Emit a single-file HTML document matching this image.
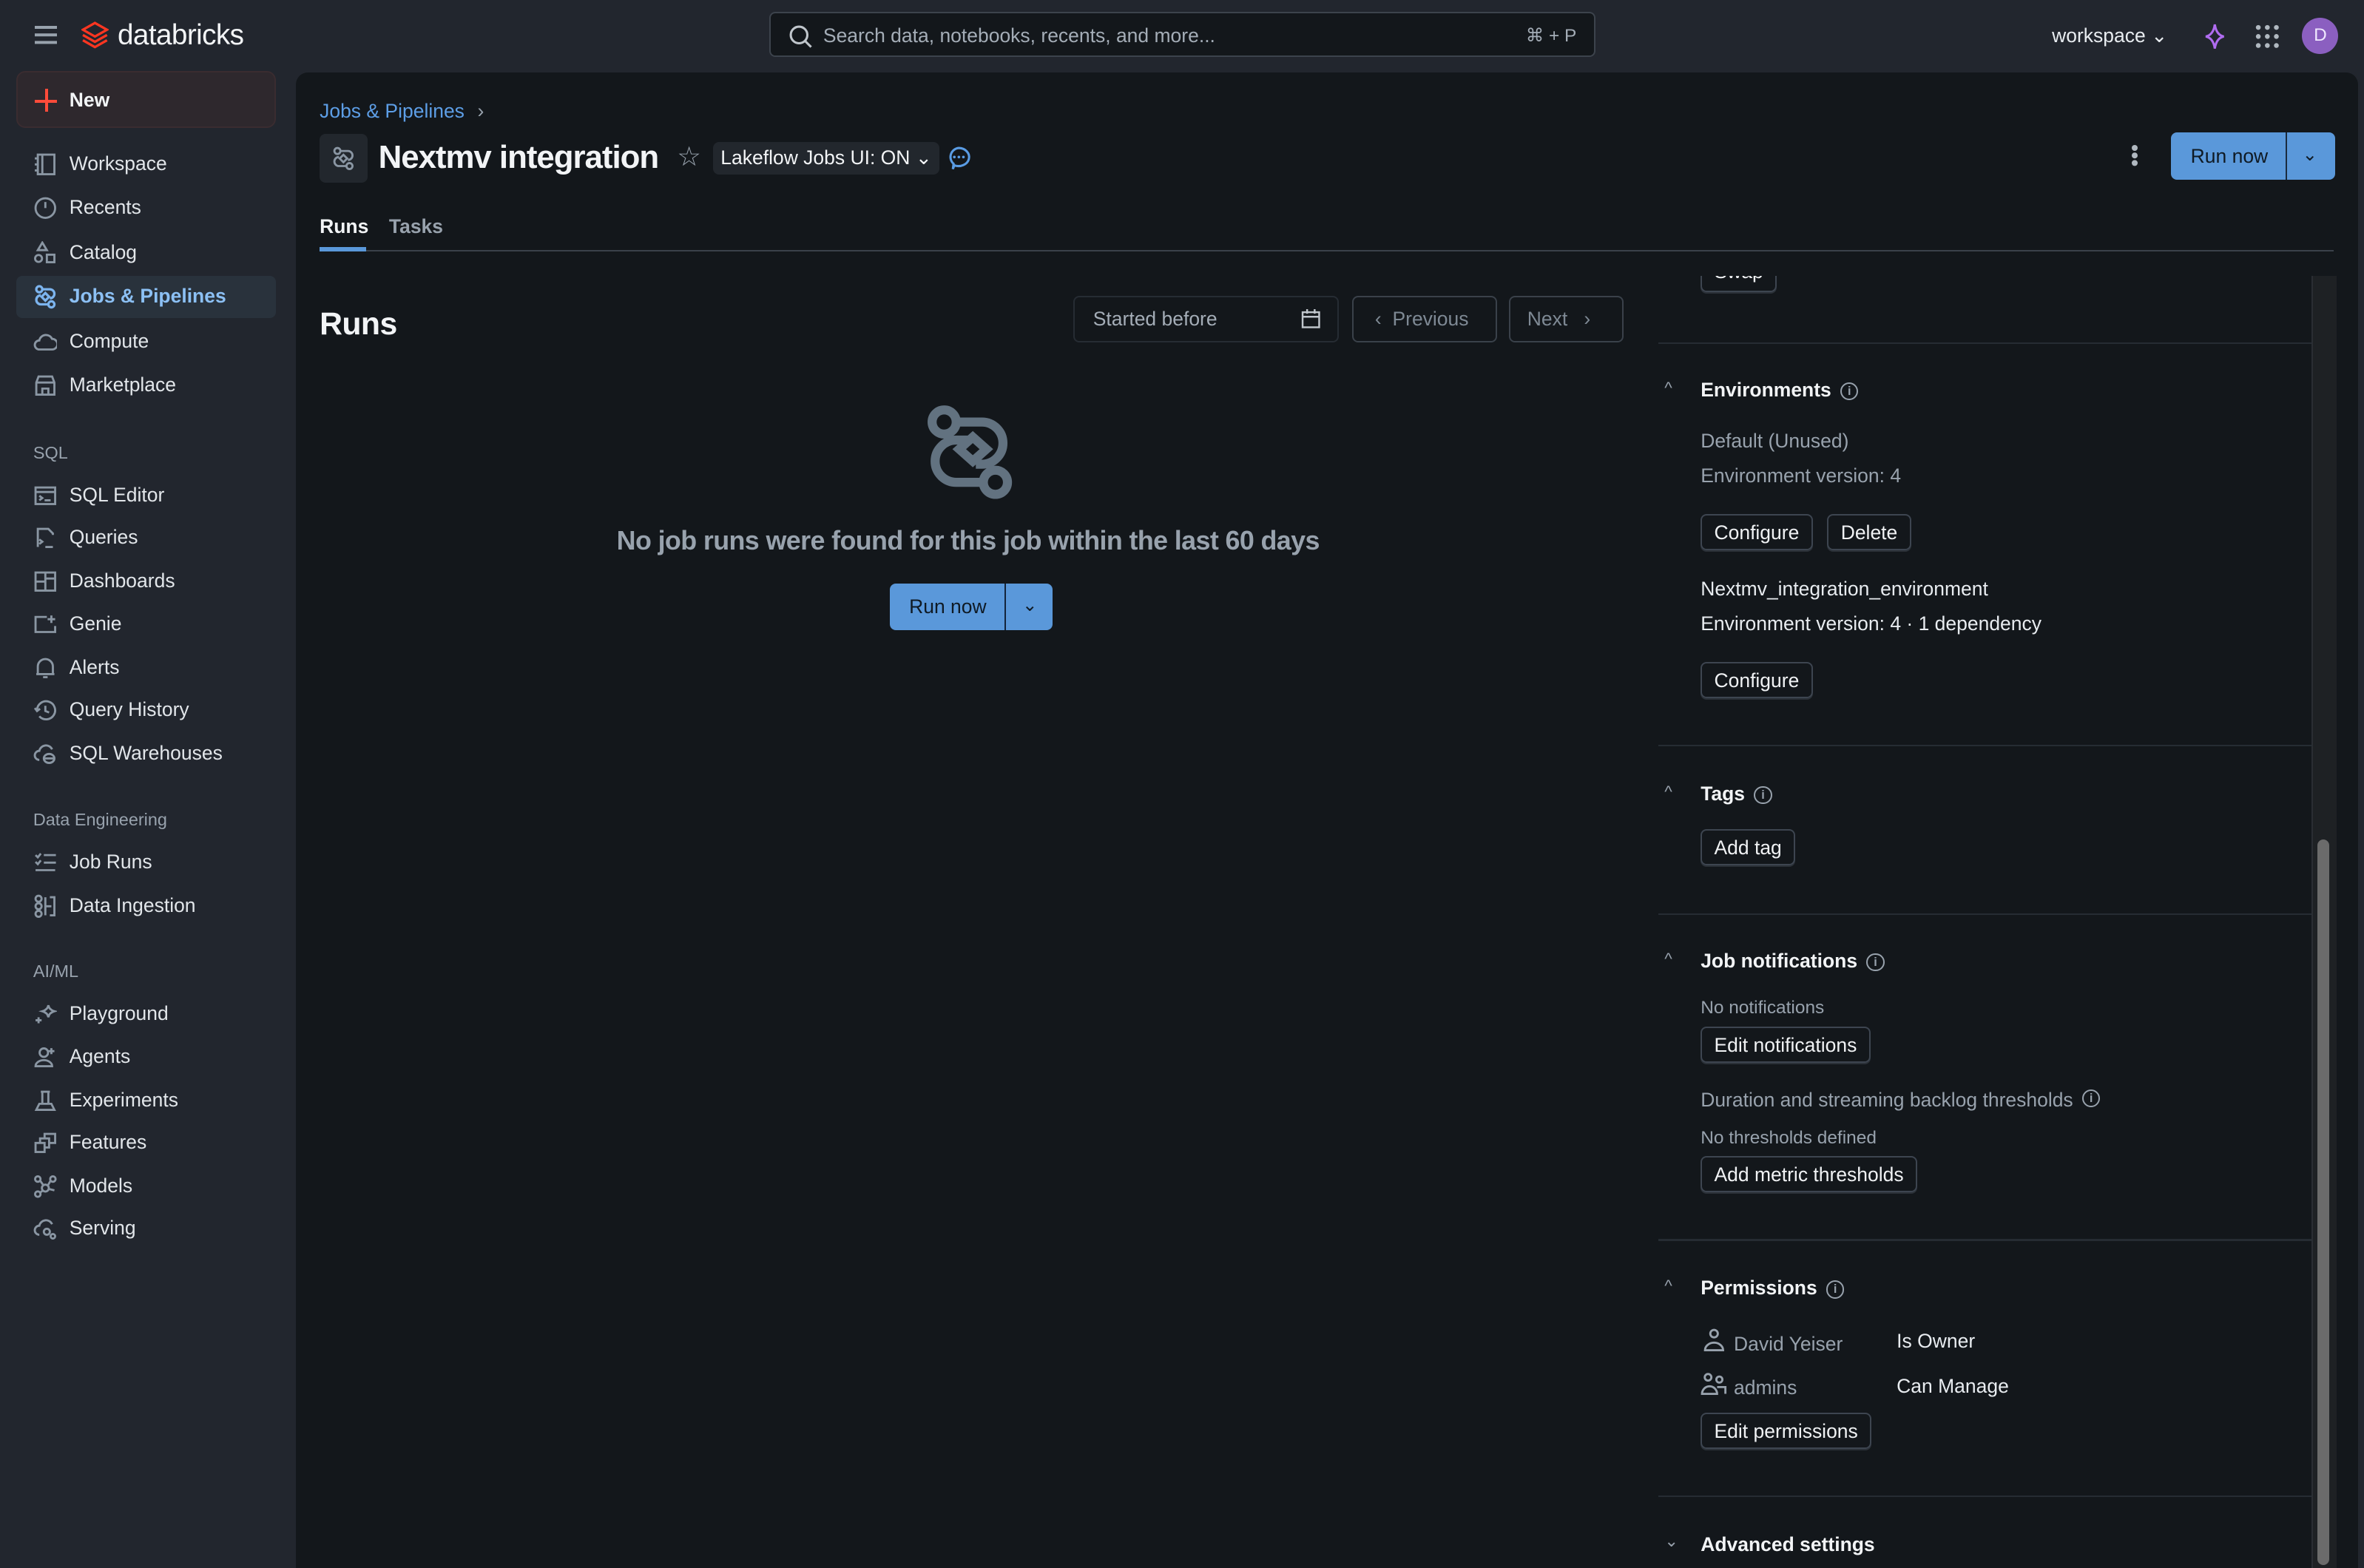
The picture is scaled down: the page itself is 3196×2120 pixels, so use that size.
<!DOCTYPE html>
<html><head><meta charset="utf-8"><style>
html,body{margin:0;padding:0;background:#22262e;width:3196px;height:2120px;overflow:hidden}
#r{zoom:2.0383;width:1568px;height:1040px;position:relative;font-family:"Liberation Sans",sans-serif;color:#e8ecf0;font-size:13px}
.a{position:absolute;white-space:nowrap}
.ic{position:absolute;width:16px;height:16px;fill:none;stroke:#8a96a3;stroke-width:1.4}
.nav{position:absolute;left:46px;font-size:13px;color:#e2e6ea}
.sec{position:absolute;left:22px;font-size:11.5px;color:#98a2ad}
.btn{position:absolute;border:1px solid #3d4550;border-radius:4px;height:22px;line-height:22px;padding:0 8px;font-size:13px;color:#f0f2f4;box-sizing:border-box;box-shadow:0 1px 0 #2b3138}
.hr{position:absolute;left:1100px;width:433px;height:1px;background:#262c33}
.h{position:absolute;left:1128px;font-weight:bold;font-size:13px;color:#f2f4f6}
.car{position:absolute;left:1104px;font-size:11px;color:#98a2ad}
.g{color:#98a2ad}
.info{display:inline-block;width:10px;height:10px;border:1.3px solid #98a2ad;border-radius:50%;font-size:8px;line-height:10px;text-align:center;color:#98a2ad;vertical-align:1px;margin-left:6px;font-weight:bold}
</style></head><body><div id="r">
<!-- top bar -->
<div class="a" style="left:23px;top:17px;width:15px;height:2px;background:#98a2ad;box-shadow:0 5px 0 #98a2ad,0 10px 0 #98a2ad"></div>
<svg class="a" style="left:54px;top:14px" width="18" height="19" viewBox="0 0 18 19"><path d="M9 1 L17 5.5 L9 10 L1 5.5 Z M1 9 L9 13.5 L17 9 M1 12.5 L9 17 L17 12.5" fill="none" stroke="#ff3621" stroke-width="1.6"/></svg>
<div class="a" style="left:78px;top:13px;font-size:19px;color:#f2f4f6;letter-spacing:-0.3px">databricks</div>
<div class="a" style="left:510px;top:8px;width:548px;height:30px;border:1px solid #3c434c;border-radius:4px;background:#13171b;box-sizing:border-box"></div>
<svg class="a" style="left:523px;top:16px" width="16" height="16"><circle cx="7" cy="7" r="5.5" fill="none" stroke="#c0c6cc" stroke-width="1.5"/><path d="M11 11 L15 15" stroke="#c0c6cc" stroke-width="1.5"/></svg>
<div class="a" style="left:546px;top:16px;color:#a4adb7;font-size:13px">Search data, notebooks, recents, and more...</div>
<div class="a" style="left:1012px;top:16px;color:#a4adb7;font-size:12px">⌘ + P</div>
<div class="a" style="left:1361px;top:16px;font-size:13px;color:#e8ecf0">workspace ⌄</div>
<svg class="a" style="left:1461px;top:15px" width="16" height="18"><path d="M8 1 Q9 8 14 9 Q9 10 8 17 Q7 10 2 9 Q7 8 8 1Z" fill="none" stroke="#b06cf0" stroke-width="1.5"/></svg>
<svg class="a" style="left:1496px;top:16px" width="16" height="16"><g fill="#b0b8c0"><circle cx="2" cy="2" r="1.6"/><circle cx="8" cy="2" r="1.6"/><circle cx="14" cy="2" r="1.6"/><circle cx="2" cy="8" r="1.6"/><circle cx="8" cy="8" r="1.6"/><circle cx="14" cy="8" r="1.6"/><circle cx="2" cy="14" r="1.6"/><circle cx="8" cy="14" r="1.6"/><circle cx="14" cy="14" r="1.6"/></g></svg>
<div class="a" style="left:1527px;top:12px;width:24px;height:24px;border-radius:50%;background:#8b5fc0;color:#f0e8ff;text-align:center;line-height:24px;font-size:12px">D</div>
<!-- sidebar -->
<div class="a" style="left:11px;top:47px;width:172px;height:38px;border-radius:6px;background:#2e282d;border:1px solid #3a2c30;box-sizing:border-box"></div>
<div class="a" style="left:23px;top:66px;width:15px;height:2px;background:#ff4b3a"></div>
<div class="a" style="left:30px;top:59px;width:2px;height:15px;background:#ff4b3a"></div>
<div class="nav" style="top:59px;font-weight:bold;color:#f2f4f6">New</div>
<div class="a" style="left:11px;top:183px;width:172px;height:28px;border-radius:4px;background:#29323c"></div>
<svg class="ic" style="left:22px;top:101px" viewBox="0 0 16 16"><rect x="3" y="1.5" width="11" height="13"/><path d="M6 1.5v13M1 4h2M1 8h2M1 12h2"/></svg>
<div class="nav" style="top:101px">Workspace</div>
<svg class="ic" style="left:22px;top:130px" viewBox="0 0 16 16"><circle cx="8" cy="8" r="6.5"/><path d="M8 4v4"/></svg>
<div class="nav" style="top:130px">Recents</div>
<svg class="ic" style="left:22px;top:160px" viewBox="0 0 16 16"><path d="M6 1l3 5H3z"/><circle cx="3.5" cy="11.5" r="2.3"/><rect x="9" y="9" width="5" height="5"/></svg>
<div class="nav" style="top:160px">Catalog</div>
<svg class="ic" style="left:22px;top:189px;stroke:#7cb4ee;stroke-width:1.6" viewBox="0 0 16 16"><circle cx="4" cy="3" r="2"/><circle cx="12" cy="13" r="2"/><path d="M6 3h5a3 3 0 0 1 0 6M10 13H5a3 3 0 0 1 0-6M8 5.5l2.5 2.5L8 10.5 5.5 8z"/></svg>
<div class="nav" style="top:189px;color:#8cc0f4;font-weight:bold">Jobs &amp; Pipelines</div>
<svg class="ic" style="left:22px;top:219px" viewBox="0 0 16 16"><path d="M4 13a3 3 0 0 1 0-6 4.5 4.5 0 0 1 8.5-1 3.5 3.5 0 0 1 0 7z"/></svg>
<div class="nav" style="top:219px">Compute</div>
<svg class="ic" style="left:22px;top:248px" viewBox="0 0 16 16"><path d="M2 6l1.5-4h9L14 6v8H2zM2 6h12M6 14v-4h4v4"/></svg>
<div class="nav" style="top:248px">Marketplace</div>
<div class="sec" style="top:294px">SQL</div>
<svg class="ic" style="left:22px;top:321px" viewBox="0 0 16 16"><rect x="1.5" y="2.5" width="13" height="11"/><path d="M1.5 5.5h13M4 8l2 1.5L4 11M7.5 11h4"/></svg><div class="nav" style="top:321px">SQL Editor</div>
<svg class="ic" style="left:22px;top:349px" viewBox="0 0 16 16"><path d="M3 14V2h7l3 3v1M4 9l2 1.5L4 12M8 14h5"/></svg><div class="nav" style="top:349px">Queries</div>
<svg class="ic" style="left:22px;top:378px" viewBox="0 0 16 16"><rect x="1.5" y="2" width="13" height="12"/><path d="M8 2v12M1.5 8h6.5M8 6h6.5"/></svg><div class="nav" style="top:378px">Dashboards</div>
<svg class="ic" style="left:22px;top:406px" viewBox="0 0 16 16"><path d="M9 3H1.5v10h13V9M12 2v5M9.5 4.5h5"/></svg><div class="nav" style="top:406px">Genie</div>
<svg class="ic" style="left:22px;top:435px" viewBox="0 0 16 16"><path d="M3 12V7a5 5 0 0 1 10 0v5H2h12M6.5 14h3"/></svg><div class="nav" style="top:435px">Alerts</div>
<svg class="ic" style="left:22px;top:463px" viewBox="0 0 16 16"><path d="M2.5 8a6 6 0 1 1 1.5 4M1 6.5l1.5 2 2-1.5M8 5v3.5l2.5 1"/></svg><div class="nav" style="top:463px">Query History</div>
<svg class="ic" style="left:22px;top:492px" viewBox="0 0 16 16"><path d="M4 12a3 3 0 0 1 0-6 4.5 4.5 0 0 1 8.5-1"/><ellipse cx="10.5" cy="11" rx="3.5" ry="3"/><path d="M7 11h7"/></svg><div class="nav" style="top:492px">SQL Warehouses</div>
<div class="sec" style="top:537px">Data Engineering</div>
<svg class="ic" style="left:22px;top:564px" viewBox="0 0 16 16"><path d="M1.5 3l1.5 1.5L5 2M7 3h8M1.5 7.5l1.5 1.5L5 6.5M7 8h8M1.5 13h13"/></svg><div class="nav" style="top:564px">Job Runs</div>
<svg class="ic" style="left:22px;top:593px" viewBox="0 0 16 16"><circle cx="3.5" cy="3" r="2"/><circle cx="3.5" cy="8" r="2"/><circle cx="3.5" cy="13" r="2"/><path d="M8 2v12M11 2h3v12h-3M8 8h4"/></svg><div class="nav" style="top:593px">Data Ingestion</div>
<div class="sec" style="top:638px">AI/ML</div>
<svg class="ic" style="left:22px;top:665px" viewBox="0 0 16 16"><path d="M10 2q.5 3 4 4-3.5 1-4 4-.5-3-4-4 3.5-1 4-4zM3.5 10v4M1.5 12h4"/></svg><div class="nav" style="top:665px">Playground</div>
<svg class="ic" style="left:22px;top:693px" viewBox="0 0 16 16"><circle cx="7" cy="5" r="2.8"/><path d="M1.5 14a5.5 4 0 0 1 11 0zM12 2v4M10 4h4"/></svg><div class="nav" style="top:693px">Agents</div>
<svg class="ic" style="left:22px;top:722px" viewBox="0 0 16 16"><path d="M5 2h6M6 2v8M10 2v8M2 14l2-4h8l2 4z"/></svg><div class="nav" style="top:722px">Experiments</div>
<svg class="ic" style="left:22px;top:750px" viewBox="0 0 16 16"><rect x="1.5" y="8" width="6" height="6"/><path d="M4.5 8V5h6v6H7.5M7.5 5V2h7v6h-4"/></svg><div class="nav" style="top:750px">Features</div>
<svg class="ic" style="left:22px;top:779px" viewBox="0 0 16 16"><circle cx="3" cy="3" r="1.8"/><circle cx="13" cy="3" r="1.8"/><circle cx="3" cy="13" r="1.8"/><circle cx="8" cy="9" r="2.3"/><path d="M4.5 4L7 7.5M11.5 4L9.5 7.5M4.5 12L6.5 10.5M10 9.5l4 1"/></svg><div class="nav" style="top:779px">Models</div>
<svg class="ic" style="left:22px;top:807px" viewBox="0 0 16 16"><path d="M4 12a3 3 0 0 1 0-6 4.5 4.5 0 0 1 8.5-1"/><circle cx="9" cy="10" r="2"/><circle cx="13" cy="13" r="1.5"/></svg><div class="nav" style="top:807px">Serving</div>
<!-- main panel -->
<div class="a" style="left:196px;top:48px;width:1368px;height:992px;background:#13171b;border-radius:8px 8px 0 0"></div>
<div class="a" style="left:212px;top:66px;color:#5d9ee6;font-size:13px">Jobs &amp; Pipelines <span style="color:#98a2ad;margin-left:5px">›</span></div>
<div class="a" style="left:212px;top:89px;width:32px;height:32px;border-radius:4px;background:#22272d"></div>
<svg class="a" style="left:220px;top:97px" width="16" height="16" viewBox="0 0 16 16" fill="none" stroke="#8a96a3" stroke-width="1.4"><circle cx="4" cy="3" r="2"/><circle cx="12" cy="13" r="2"/><path d="M6 3h5a3 3 0 0 1 0 6M10 13H5a3 3 0 0 1 0-6M8 5.5l2.5 2.5L8 10.5 5.5 8z"/></svg>
<div class="a" style="left:251px;top:92px;font-size:21.5px;font-weight:bold;color:#f2f4f6;letter-spacing:-0.5px">Nextmv integration</div>
<div class="a" style="left:449px;top:93px;font-size:18px;color:#98a2ad">☆</div>
<div class="a" style="left:473px;top:94px;width:150px;height:22px;border-radius:4px;background:#22272d"></div>
<div class="a" style="left:478px;top:97px;font-size:13px;color:#f2f4f6">Lakeflow Jobs UI: ON ⌄</div>
<svg class="a" style="left:627px;top:96px" width="18" height="18"><path d="M9 2a7 6 0 1 1-3 11.5L5 16l.5-3.5A6 6 0 0 1 9 2z" fill="none" stroke="#5a9ce4" stroke-width="1.5"/><g fill="#5a9ce4"><circle cx="6" cy="8" r=".9"/><circle cx="9" cy="8" r=".9"/><circle cx="12" cy="8" r=".9"/></g></svg>
<div class="a" style="left:1414px;top:96px;width:4px;height:4px;border-radius:50%;background:#b0b8c0;box-shadow:0 5px 0 #b0b8c0,0 10px 0 #b0b8c0"></div>
<div class="a" style="left:1440px;top:88px;width:109px;height:31px;border-radius:4px;background:#5a98da"></div>
<div class="a" style="left:1516px;top:88px;width:1px;height:31px;background:#1a2b3e"></div>
<div class="a" style="left:1453px;top:96px;color:#0f1a24;font-size:13px">Run now</div>
<div class="a" style="left:1527px;top:95px;color:#0f1a24;font-size:12px">⌄</div>
<div class="a" style="left:212px;top:143px;font-weight:bold;font-size:13px;color:#f2f4f6">Runs</div>
<div class="a" style="left:258px;top:143px;font-weight:bold;font-size:13px;color:#98a2ad">Tasks</div>
<!-- right panel swap (behind tab line) -->
<div class="btn" style="left:1128px;top:172px;height:22px;border-top:none;border-radius:0 0 4px 4px;line-height:16px">Swap</div>
<div class="a" style="left:1100px;top:168px;width:440px;height:15px;background:#13171b"></div>
<div class="a" style="left:212px;top:166px;width:1336px;height:1px;background:#3a414a"></div>
<div class="a" style="left:212px;top:164px;width:31px;height:3px;background:#5a98da"></div>
<div class="a" style="left:212px;top:203px;font-size:21px;font-weight:bold;color:#f2f4f6;letter-spacing:-0.3px">Runs</div>
<div class="a" style="left:712px;top:196px;width:176px;height:31px;border:1px solid #262c33;border-radius:4px;box-sizing:border-box"></div>
<div class="a" style="left:725px;top:204px;color:#a4adb7">Started before</div>
<svg class="a" style="left:863px;top:204px" width="13" height="14"><rect x="1" y="3" width="11" height="10" fill="none" stroke="#c0c6cc" stroke-width="1.2"/><path d="M1 6h11M4 1v3M9 1v3" stroke="#c0c6cc" stroke-width="1.2"/></svg>
<div class="a" style="left:897px;top:196px;width:96px;height:31px;border:1px solid #3a414a;border-radius:4px;box-sizing:border-box"></div>
<div class="a" style="left:912px;top:204px;color:#7e8994">‹&nbsp; Previous</div>
<div class="a" style="left:1001px;top:196px;width:76px;height:31px;border:1px solid #3a414a;border-radius:4px;box-sizing:border-box"></div>
<div class="a" style="left:1013px;top:204px;color:#7e8994">Next &nbsp;&nbsp;›</div>
<!-- empty state -->
<svg class="a" style="left:614px;top:265px" width="62" height="70" viewBox="0 0 62 70" fill="none" stroke="#627280" stroke-width="6"><circle cx="12" cy="15" r="8"/><circle cx="46" cy="55" r="8"/><path d="M20 15h17a10 10 0 0 1 0 28h-4M38 55H20a10 10 0 0 1 0-28h8M31 25l9 8-9 8-9-8z"/></svg>
<div class="a" style="left:409px;top:349px;font-size:17.6px;font-weight:bold;color:#98a2ad;letter-spacing:-0.3px">No job runs were found for this job within the last 60 days</div>
<div class="a" style="left:590px;top:387px;width:108px;height:31px;border-radius:4px;background:#5a98da"></div>
<div class="a" style="left:666px;top:387px;width:1px;height:31px;background:#13243a"></div>
<div class="a" style="left:603px;top:395px;color:#0f1a24">Run now</div>
<div class="a" style="left:678px;top:394px;color:#0f1a24;font-size:12px">⌄</div>
<!-- right panel -->
<div class="hr" style="top:227px"></div>
<div class="car" style="top:251px">^</div>
<div class="h" style="top:251px">Environments<span class="info">i</span></div>
<div class="a g" style="left:1128px;top:285px">Default (Unused)</div>
<div class="a g" style="left:1128px;top:308px">Environment version: 4</div>
<div class="btn" style="left:1128px;top:341px;height:24px;line-height:23px">Configure</div>
<div class="btn" style="left:1212px;top:341px;height:24px;line-height:23px">Delete</div>
<div class="a" style="left:1128px;top:383px">Nextmv_integration_environment</div>
<div class="a" style="left:1128px;top:406px">Environment version: 4 · 1 dependency</div>
<div class="btn" style="left:1128px;top:439px;height:24px;line-height:23px">Configure</div>
<div class="hr" style="top:494px"></div>
<div class="car" style="top:519px">^</div>
<div class="h" style="top:519px">Tags<span class="info">i</span></div>
<div class="btn" style="left:1128px;top:550px;height:24px;line-height:23px">Add tag</div>
<div class="hr" style="top:606px"></div>
<div class="car" style="top:630px">^</div>
<div class="h" style="top:630px">Job notifications<span class="info">i</span></div>
<div class="a g" style="left:1128px;top:662px;font-size:12px">No notifications</div>
<div class="btn" style="left:1128px;top:681px;height:24px;line-height:23px">Edit notifications</div>
<div class="a g" style="left:1128px;top:722px">Duration and streaming backlog thresholds<span class="info" style="vertical-align:3px">i</span></div>
<div class="a g" style="left:1128px;top:748px;font-size:12px">No thresholds defined</div>
<div class="btn" style="left:1128px;top:767px;height:24px;line-height:23px">Add metric thresholds</div>
<div class="hr" style="top:822px"></div>
<div class="car" style="top:847px">^</div>
<div class="h" style="top:847px">Permissions<span class="info">i</span></div>
<svg class="a" style="left:1129px;top:881px" width="18" height="16" fill="none" stroke="#98a2ad" stroke-width="1.4"><circle cx="8" cy="3.5" r="2.5"/><path d="M2 14.5a6 5 0 0 1 12 0z"/></svg>
<div class="a g" style="left:1150px;top:884px">David Yeiser</div>
<div class="a" style="left:1258px;top:882px">Is Owner</div>
<svg class="a" style="left:1128px;top:910px" width="18" height="16" fill="none" stroke="#98a2ad" stroke-width="1.4"><circle cx="5" cy="3.5" r="2.2"/><circle cx="12.5" cy="5" r="2"/><path d="M1 14.5a5 5 0 0 1 10 0zM11 10h5.5v4.5"/></svg>
<div class="a g" style="left:1150px;top:913px">admins</div>
<div class="a" style="left:1258px;top:912px">Can Manage</div>
<div class="btn" style="left:1128px;top:937px;height:24px;line-height:23px">Edit permissions</div>
<div class="hr" style="top:992px"></div>
<div class="car" style="top:1016px">⌄</div>
<div class="h" style="top:1017px">Advanced settings</div>
<!-- scrollbar -->
<div class="a" style="left:1533px;top:183px;width:16px;height:857px;background:#1e2124;border-left:1px solid #2a2e33"></div>
<div class="a" style="left:1537px;top:557px;width:8px;height:481px;border-radius:4px;background:#6b6b6b"></div>
</div></body></html>
